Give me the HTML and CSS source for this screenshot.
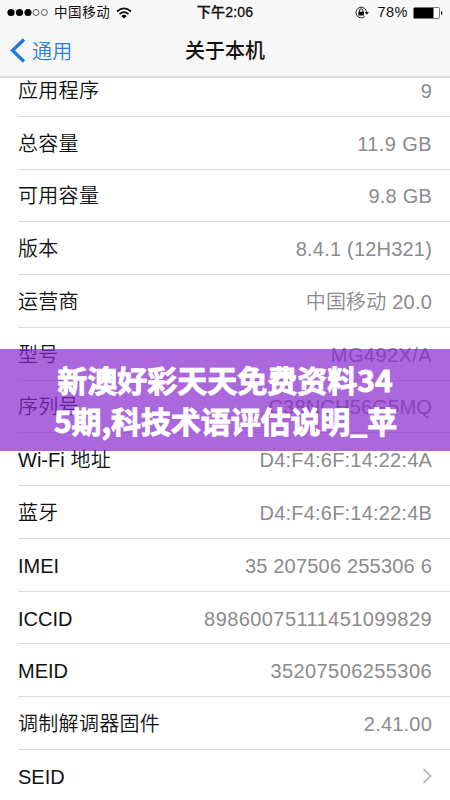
FILE: index.html
```html
<!DOCTYPE html>
<html lang="zh-CN">
<head>
<meta charset="utf-8">
<title>关于本机</title>
<link rel="stylesheet" href="styles.css">
</head>
<body>
<header class="header">
  <div class="status">
    <div class="status-left">
      <svg class="signal" width="42" height="9" viewBox="0 0 42 9"><circle cx="4" cy="4.5" r="3.6"/><circle cx="12.5" cy="4.5" r="3.6"/><circle cx="21" cy="4.5" r="3.6"/><g fill="none" stroke="#333" stroke-width=".8"><circle cx="29" cy="4.5" r="3"/><circle cx="37.3" cy="4.5" r="3"/></g></svg>
      <span class="carrier">中国移动</span>
      <svg class="wifi" width="16" height="12" viewBox="0 0 16 12"><g fill="none" stroke="#111" stroke-width="1.7"><path d="M1 4.5Q8-1.7 15 4.5"/><path d="M3.5 7.1Q8 3.1 12.5 7.1"/></g><path d="M5.3 8.9Q8 6.7 10.7 8.9L8 11.6Z"/></svg>
    </div>
    <span class="time">下午2:06</span>
    <div class="status-right">
      <svg class="lock" width="14" height="13" viewBox="0 0 14 13"><path d="M11.6 6.5A5.3 5.3 0 1 0 9.7 10.6" fill="none" stroke="#222"/><path d="M9.8 6h4l-2 2.8Z"/><rect x="3.4" y="5.7" width="5.6" height="3.8"/><path d="M4.5 6V4.6a1.7 1.7 0 0 1 3.4 0V6" fill="none" stroke="#111"/></svg>
      <span class="percent">78%</span>
      <svg class="battery" width="30" height="12" viewBox="0 0 30 12"><rect x=".5" y=".5" width="26" height="11" rx="1" fill="#fff" stroke="#777"/><rect x="1" y="1" width="19.5" height="10"/><path d="M28 4q1.5.3 1.5 2T28 8Z"/></svg>
    </div>
  </div>
  <nav class="nav">
    <a class="back"><svg width="16" height="25" viewBox="0 0 16 25"><path d="M14 1.5 2.5 12.5 14 23.5" fill="none" stroke="#1a78d8" stroke-width="3.2"/></svg><span>通用</span></a>
    <h1 class="title">关于本机</h1>
  </nav>
</header>
<main class="list">
  <div class="row"><span class="label">应用程序</span><span class="value">9</span></div>
  <div class="row"><span class="label">总容量</span><span class="value digits">11.9 GB</span></div>
  <div class="row"><span class="label">可用容量</span><span class="value">9.8 GB</span></div>
  <div class="row"><span class="label">版本</span><span class="value">8.4.1 (12H321)</span></div>
  <div class="row"><span class="label">运营商</span><span class="value">中国移动 20.0</span></div>
  <div class="row"><span class="label">型号</span><span class="value digits">MG492X/A</span></div>
  <div class="row"><span class="label">序列号</span><span class="value">C38NCH56G5MQ</span></div>
  <div class="row"><span class="label"><span class="latin">Wi-Fi</span> 地址</span><span class="value">D4:F4:6F:14:22:4A</span></div>
  <div class="row"><span class="label">蓝牙</span><span class="value">D4:F4:6F:14:22:4B</span></div>
  <div class="row"><span class="label latin">IMEI</span><span class="value">35 207506 255306 6</span></div>
  <div class="row"><span class="label latin">ICCID</span><span class="value digits">89860075111451099829</span></div>
  <div class="row"><span class="label latin">MEID</span><span class="value digits">35207506255306</span></div>
  <div class="row"><span class="label">调制解调器固件</span><span class="value">2.41.00</span></div>
  <div class="row"><span class="label latin">SEID</span><svg class="chevron" width="10" height="16" viewBox="0 0 10 16"><path d="m1.5 1 7 7-7 7" fill="none" stroke="#bbb" stroke-width="1.8"/></svg></div>
</main>
<div class="banner"><div>新澳好彩天天免费资料34</div><div class="banner-tail">5期,科技术语评估说明_苹</div></div>
</body>
</html>
```
FILE: styles.css
```css
* { box-sizing: border-box; }
body {
  margin: 0;
  width: 450px;
  height: 800px;
  overflow: hidden;
  position: relative;
  background: #fff;
  color: #111;
  font-family: "Liberation Sans", "Noto Sans CJK SC", sans-serif;
}
.header {
  position: relative;
  z-index: 1;
  height: 78px;
  background: #f7f7f7;
  border-bottom: 2px solid #dcdcdc;
}
.status {
  height: 25px;
  padding: 0 7px;
  display: grid;
  grid-template-columns: 1fr auto 1fr;
  align-items: center;
  font-size: 13px;
  line-height: 25px;
}
.status-left, .status-right { display: flex; align-items: center; }
.status-right { justify-content: flex-end; }
.carrier { margin-left: 5px; font-size: 13.5px; letter-spacing: .6px; }
.wifi { margin-left: 6px; }
.time { font-weight: 500; font-size: 14px; letter-spacing: .2px; -webkit-text-stroke: .3px #111; }
.percent { margin: 0 5px 0 8px; font-size: 14.5px; letter-spacing: .5px; }
.nav {
  height: 51px;
  display: grid;
  grid-template-columns: 1fr auto 1fr;
  align-items: center;
}
.back {
  display: flex;
  align-items: center;
  padding-left: 10px;
  gap: 6px;
  color: #2a80d8;
  font-size: 20px;
  font-weight: 350;
  letter-spacing: .3px;
}
.title { margin: 0; font-size: 20px; font-weight: 500; line-height: 28px; }
.list { margin-top: -14px; padding-left: 18px; }
.row {
  height: 52.78px;
  display: flex;
  align-items: center;
  justify-content: space-between;
  padding: 2px 18px 0 0;
  border-bottom: 1px solid #dcdcdc;
  line-height: 28px;
  white-space: nowrap;
}
.label { font-size: 20px; font-weight: 350; letter-spacing: .3px; }
.latin { letter-spacing: 0; }
.value { font-size: 20px; font-weight: 350; letter-spacing: .2px; color: #8b8b8d; }
.digits { letter-spacing: .42px; }
.chevron { margin-top: -1px; }
.banner {
  position: absolute;
  z-index: 2;
  top: 349px;
  left: 0;
  width: 100%;
  height: 102px;
  padding-top: 10px;
  background: rgba(136, 39, 205, .7);
  color: #fff;
  font: 700 30px/41px "Noto Sans CJK SC", sans-serif;
  -webkit-text-stroke: .9px #fff;
  text-align: center;
  white-space: nowrap;
}
.banner-tail { padding-left: 1px; letter-spacing: -.1px; }
```
